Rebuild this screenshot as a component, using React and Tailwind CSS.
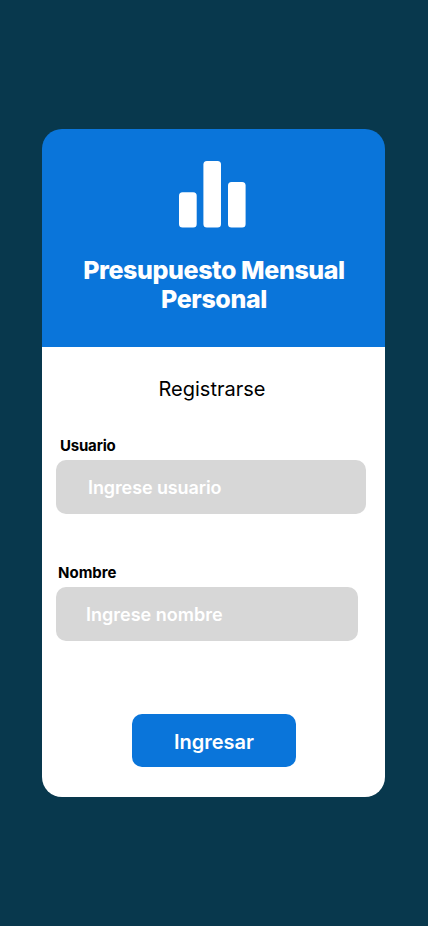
function Field({ id, label, placeholder, labelClass, inputClass }) {
  return (
    <div className="flex flex-col items-start gap-[5px]">
      <label htmlFor={id} className={`block text-[15px] leading-[18px] font-bold whitespace-nowrap ${labelClass}`}>
        {label}
      </label>
      <input
        id={id}
        type="text"
        placeholder={placeholder}
        className={`block h-[54px] rounded-[10px] bg-[#d7d7d7] pt-[1px] text-[18px] font-semibold outline-none placeholder:text-white placeholder:opacity-100 ${inputClass}`}
      />
    </div>
  );
}

function BarsIcon() {
  return (
    <svg className="block" width="67" height="67" viewBox="0 0 67 67" fill="white" aria-hidden="true">
      <rect x="0" y="31.3" width="17.7" height="35.2" rx="3.5" />
      <rect x="24.4" y="0" width="17.6" height="66.5" rx="3.5" />
      <rect x="49" y="21" width="17.6" height="45.5" rx="3.5" />
    </svg>
  );
}

export default function App() {
  return (
    <main className="flex h-[926px] w-full flex-col items-start bg-[#08384d] pt-[129px] pl-[42px] font-['Inter',sans-serif] text-black">
      <section className="flex h-[668px] w-[343px] flex-col rounded-[20px] bg-[linear-gradient(#0a75da_218px,#ffffff_218px)]">
        <header className="flex h-[218px] flex-col items-center pt-8 pr-[2px]">
          <BarsIcon />
          <h1 className="mt-[28px] ml-[3px] text-center text-[25px] leading-[29px] font-extrabold text-white">
            <span className="block tracking-[-0.4px] whitespace-nowrap">Presupuesto Mensual</span>
            <span className="block tracking-[-0.4px]">Personal</span>
          </h1>
        </header>
        <form className="flex flex-col pt-[30px] pl-[14px]">
          <h2 className="w-[312px] text-center text-[20px] leading-6">Registrarse</h2>
          <div className="mt-9 flex flex-col gap-[50px]">
            <Field
              id="usuario"
              label="Usuario"
              placeholder="Ingrese usuario"
              labelClass="ml-[4px] tracking-[-0.2px]"
              inputClass="w-[310px] pl-[32px] tracking-[-0.1px]"
            />
            <Field
              id="nombre"
              label="Nombre"
              placeholder="Ingrese nombre"
              labelClass="ml-[2px] tracking-normal"
              inputClass="w-[302px] pl-[30px] tracking-normal"
            />
          </div>
          <button
            type="button"
            className="mt-[73px] ml-[76px] h-[53px] w-[164px] rounded-[10px] bg-[#0a75da] pt-[2px] text-[20px] font-semibold text-white"
          >
            Ingresar
          </button>
        </form>
      </section>
    </main>
  );
}
